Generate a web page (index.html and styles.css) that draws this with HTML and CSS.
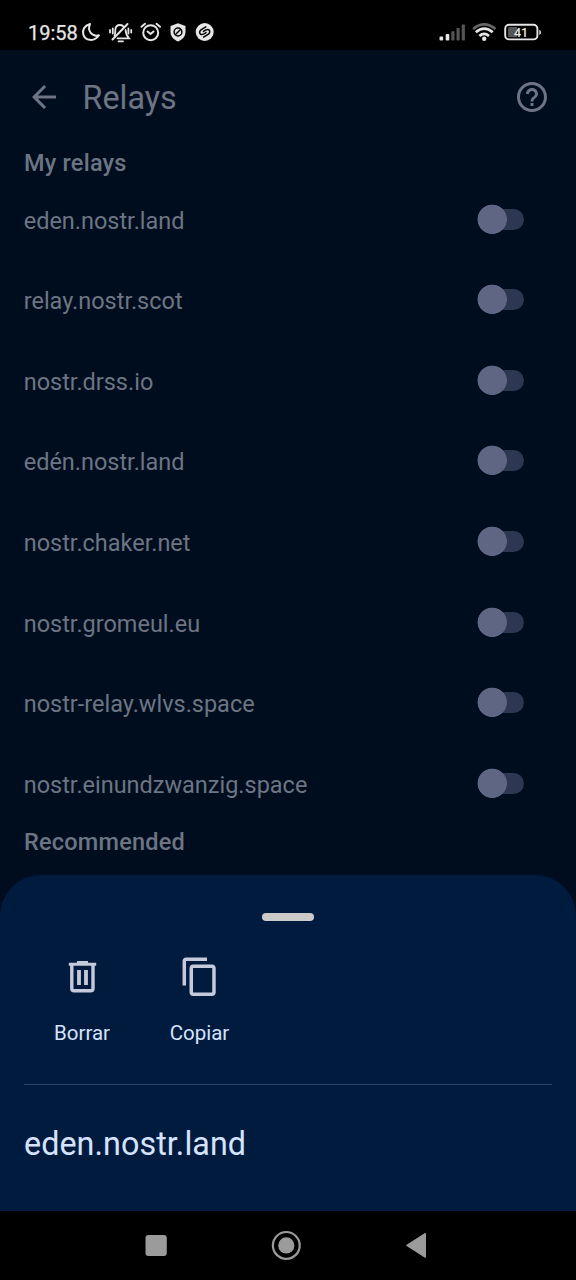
FILE: index.html
```html
<!DOCTYPE html>
<html lang="es">
<head>
<meta charset="utf-8">
<title>Relays</title>
<link rel="stylesheet" href="styles.css">
</head>
<body>
<div class="phone">
  <header class="status">
    <span class="clock">19:58</span>
    <svg class="status-left" width="136" height="24" viewBox="80 20 136 24" fill="none" stroke="#e6e6e6" stroke-width="2" stroke-linecap="round">
      <path d="M90 24C84.500 25.500 82 30 83.300 34.500C85 40.500 94 42.500 99 35.300C92 37 87 31 90 24Z" stroke-linejoin="round"/>
      <g stroke-width="1.800">
        <path d="M114.500 36C115.300 34.500 115.200 33 115.300 30C115.500 27 117.500 25 120 25C121.800 25 123 25.500 124 27M125.600 30C125.700 34 126.500 35.500 129 38.300H117.500"/>
        <path d="M112.500 39.500L127.500 24" stroke-width="2"/>
        <path d="M118.500 41.300H123M112.800 28.500V33.500M110 30V32.500M128.400 28.500V33.500M131.200 30V32.500"/>
      </g>
      <circle cx="150.700" cy="32.700" r="7.500"/>
      <path d="M147.600 31.500L150.500 34L153.500 31.500M141.500 26.800L145 23.800M160 26.800L156.500 23.800"/>
      <path d="M178 23.200L185.500 26V31.500C185.500 36.500 182.500 39.500 178 41.500C173.500 39.500 170.500 36.500 170.500 31.500V26Z" fill="#e6e6e6" stroke="none"/>
      <circle cx="178" cy="32" r="3.900" stroke="#000" stroke-width="1.500"/>
      <path d="M175.500 34.500L180.500 29.500" stroke="#000" stroke-width="1.500"/>
      <circle cx="204.700" cy="32" r="9" fill="#e6e6e6" stroke="none"/>
      <path d="M205.800 26.800L201 29.800C199.300 31 199.300 33.200 200.500 34.200C201.800 35.200 203.300 34.600 206 32.600M203.600 37.200L208.400 34.200C210.100 33 210.100 30.800 208.900 29.800C207.600 28.800 206.100 29.400 203.400 31.400" stroke="#000" stroke-width="1.500"/>
    </svg>
    <svg class="status-right" width="106" height="24" viewBox="438 20 106 24" fill="none">
      <g fill="#e6e6e6"><rect x="439.500" y="36.500" width="3.600" height="4" rx="1"/><rect x="445.700" y="34" width="3.600" height="6.500" rx="1"/></g>
      <g fill="#555"><rect x="451.300" y="31.200" width="3.200" height="9.300" rx=".8"/><rect x="456.500" y="28" width="3.200" height="12.500" rx=".8"/><rect x="461.700" y="24.500" width="3.200" height="16" rx=".8"/></g>
      <path d="M473 29Q484.200 19.800 495.500 29" stroke="#666" stroke-width="2.600"/>
      <path d="M475.800 32.300Q484.200 25 492.700 32.300M479.400 35.900Q484.200 31.700 489 35.900" stroke="#e6e6e6" stroke-width="2.700"/>
      <circle cx="484.200" cy="38.800" r="2.200" fill="#e6e6e6"/>
      <rect x="505.200" y="24.800" width="32.200" height="14.600" rx="4" stroke="#e6e6e6" stroke-width="1.900"/>
      <path d="M509.500 27H517V37.200H509.500Q508 37.200 508 35.700V28.500Q508 27 509.500 27Z" fill="#555"/>
      <path d="M539.300 30C541.500 30 541.500 34.700 539.300 34.700Z" fill="#e6e6e6"/>
      <text class="battery-text" x="521" y="36.800" text-anchor="middle">41</text>
    </svg>
  </header>

  <main class="screen">
    <div class="appbar">
      <svg class="back" width="36" height="36" viewBox="0 0 24 24" fill="currentColor"><path d="M20 11H7.830l5.590-5.590L12 4l-8 8 8 8 1.410-1.410L7.830 13H20z"/></svg>
      <h1 class="title">Relays</h1>
      <svg width="36" height="36" viewBox="0 0 24 24" fill="currentColor"><path d="M11 18h2v-2h-2v2zm1-16C6.480 2 2 6.480 2 12s4.480 10 10 10 10-4.480 10-10S17.520 2 12 2zm0 18c-4.410 0-8-3.590-8-8s3.590-8 8-8 8 3.590 8 8-3.590 8-8 8zm0-14c-2.210 0-4 1.790-4 4h2c0-1.100.9-2 2-2s2 .9 2 2c0 2-3 1.750-3 5h2c0-2.250 3-2.500 3-5 0-2.210-1.790-4-4-4z"/></svg>
    </div>
    <h2 class="section">My relays</h2>
    <ul class="relays">
      <li class="relay"><span>eden.nostr.land</span><i class="switch"></i></li>
      <li class="relay"><span>relay.nostr.scot</span><i class="switch"></i></li>
      <li class="relay"><span>nostr.drss.io</span><i class="switch"></i></li>
      <li class="relay"><span>edén.nostr.land</span><i class="switch"></i></li>
      <li class="relay"><span>nostr.chaker.net</span><i class="switch"></i></li>
      <li class="relay"><span>nostr.gromeul.eu</span><i class="switch"></i></li>
      <li class="relay"><span>nostr-relay.wlvs.space</span><i class="switch"></i></li>
      <li class="relay"><span>nostr.einundzwanzig.space</span><i class="switch"></i></li>
    </ul>
    <h2 class="section">Recommended</h2>
  </main>

  <section class="sheet">
    <div class="handle"></div>
    <div class="actions">
      <div class="action">
        <svg width="44" height="44" viewBox="61 955 44 44" fill="none" stroke="currentColor">
          <path d="M68.800 964.200H96.200M77 962.600H88" stroke-width="3"/>
          <path d="M71.800 965V988.500Q71.800 990.800 74.100 990.800H90.700Q93 990.800 93 988.500V965" stroke-width="3.400"/>
          <path d="M79 970V985M86 970V985" stroke-width="3.800"/>
        </svg>
        <span>Borrar</span>
      </div>
      <div class="action">
        <svg width="44" height="44" viewBox="-.6 -.5 25.200 25.200" fill="currentColor"><path d="M16 1H4c-1.100 0-2 .9-2 2v14h2V3h12V1zm3 4H8c-1.100 0-2 .9-2 2v14c0 1.100.9 2 2 2h11c1.100 0 2-.9 2-2V7c0-1.100-.9-2-2-2zm0 16H8V7h11v14z"/></svg>
        <span>Copiar</span>
      </div>
    </div>
    <hr class="divider">
    <p class="selected">eden.nostr.land</p>
  </section>

  <nav class="navbar">
    <svg width="576" height="69" viewBox="0 1211 576 69" fill="#9b9b9b">
      <rect x="145.500" y="1235" width="21.300" height="21" rx="3"/>
      <circle cx="286.300" cy="1245.400" r="13.400" fill="none" stroke="#9b9b9b" stroke-width="2.200"/>
      <circle cx="286.300" cy="1245.400" r="8.100"/>
      <path d="M407 1245.400L425.300 1233.700V1257.100Z" stroke="#9b9b9b" stroke-width="1.400" stroke-linejoin="round"/>
    </svg>
  </nav>
</div>
</body>
</html>
```
FILE: styles.css
```css
* { box-sizing: border-box; }

body {
  margin: 0;
  background: #000;
  font-family: Roboto, "Liberation Sans", sans-serif;
}

h1, h2, p, ul { margin: 0; padding: 0; }

.phone {
  width: 576px;
  height: 1280px;
  display: grid;
  grid-template-rows: 50px 825px 336px 69px;
  overflow: hidden;
  background: #000;
}

.status {
  display: flex;
  align-items: flex-start;
  padding: 20px 32px 0 28px;
  color: #e6e6e6;
}

.clock {
  width: 52px;
  font-size: 20px;
  line-height: 26px;
  font-weight: 400;
  -webkit-text-stroke: .25px #e6e6e6;
  white-space: nowrap;
}

.status-right { margin-left: auto; }

.battery-text {
  font-size: 12.5px;
  font-weight: 500;
  fill: #e6e6e6;
}

.screen {
  height: 877px;
  padding: 0 24px;
  background: #000d1e;
  color: #6d7584;
}

.appbar {
  height: 94px;
  display: flex;
  align-items: center;
  margin: 0 2px;
}

.appbar svg { flex: none; }

.title {
  flex: 1;
  margin-left: 20.5px;
  padding-top: 1px;
  font-size: 32.3px;
  line-height: 40px;
  font-weight: 400;
}

.section {
  height: 36px;
  font-size: 23.5px;
  line-height: 38px;
  font-weight: 500;
  letter-spacing: .22px;
}

.relays {
  list-style: none;
  margin-bottom: -1px;
}

.relay {
  height: 80.55px;
  display: flex;
  align-items: flex-start;
  justify-content: space-between;
  padding: 23.8px 28px 0 0;
  font-size: 23.48px;
  line-height: 34px;
  isolation: isolate;
}

.relay span { margin-left: -.3px; }

.switch {
  width: 47px;
  height: 31px;
  background:
    radial-gradient(circle at 15.2px 15.3px, #5f6684 14.300px, transparent 15px);
  position: relative;
}

.switch::before {
  content: "";
  position: absolute;
  z-index: -1;
  left: 8px;
  top: 5px;
  width: 39px;
  height: 21px;
  border-radius: 11px;
  background: #2e3751;
}

.sheet {
  z-index: 1;
  border-radius: 41px 41px 0 0;
  background: #001b3e;
  color: #d6e3ff;
  padding: 38px 24px 0;
}

.handle {
  width: 52px;
  height: 8px;
  margin: 0 auto;
  border-radius: 4px;
  background: #cccac9;
}

.actions {
  display: flex;
  padding-top: 34px;
  height: 163px;
}

.action {
  width: 117px;
  display: flex;
  flex-direction: column;
  align-items: center;
  gap: 20px;
  font-size: 20.5px;
  line-height: 28px;
}

.action svg { color: #c5cadb; }
.action:first-child span { margin-left: -1px; }

.divider {
  height: 1px;
  margin: 0;
  border: 0;
  background: #2e4262;
}

.selected {
  padding-top: 39px;
  font-size: 32.3px;
  line-height: 40px;
  letter-spacing: .05px;
}

.navbar { z-index: 1; background: #000; }
.navbar svg { display: block; }
```
